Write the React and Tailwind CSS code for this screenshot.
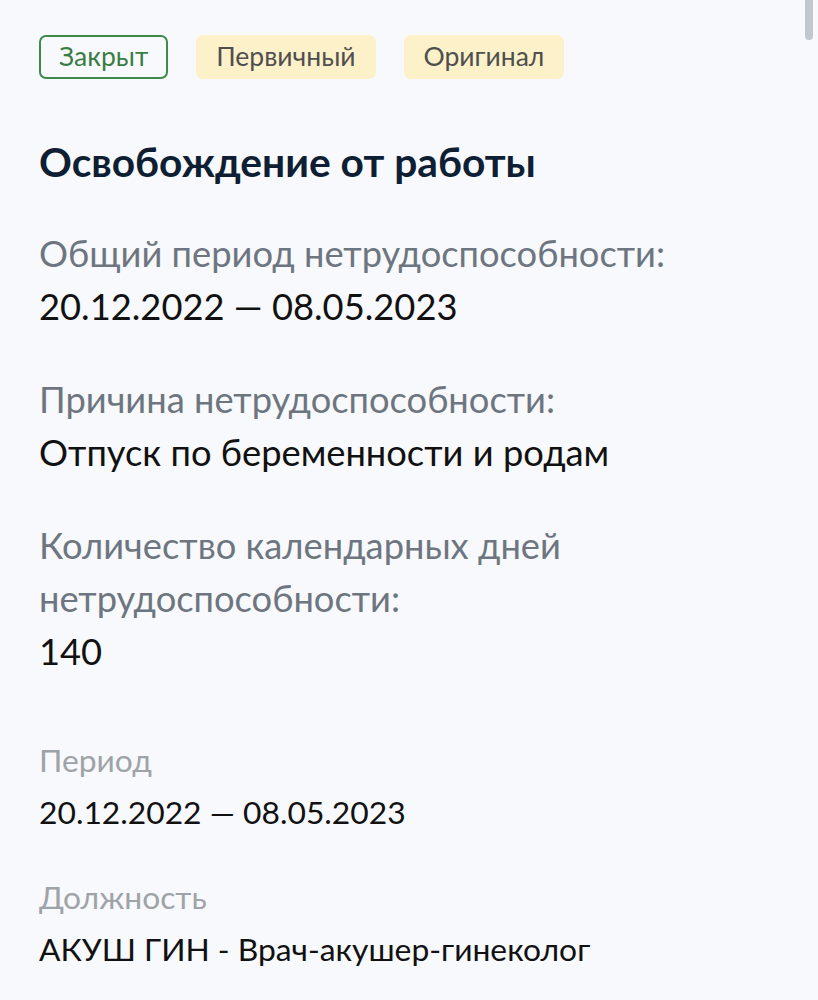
function Badge({ children, variant }) {
  if (variant === 'closed') {
    return (
      <span className="inline-flex items-center h-[44px] px-[18px] rounded-[7px] border-2 border-[#3f8a4b] text-[#3a7d44] text-[26.5px]">
        {children}
      </span>
    );
  }
  return (
    <span className="inline-flex items-center h-[44px] px-[20px] rounded-[7px] bg-[#fdf1c9] text-[#4f4f4f] text-[26.5px]">
      {children}
    </span>
  );
}

function Field({ label, value }) {
  return (
    <div className="text-[36.3px] leading-[53px]">
      <div className="text-[#6d7680]">{label}</div>
      <div className="text-[#111]">{value}</div>
    </div>
  );
}

function SmallField({ label, value }) {
  return (
    <div className="text-[31.8px]">
      <div className="text-[#9ea3a8] leading-[40px]">{label}</div>
      <div className="text-[#111] leading-[40px] mt-[12px]">{value}</div>
    </div>
  );
}

export default function App() {
  return (
    <div className="min-h-screen bg-[#f8f9fc] font-['Lato','Noto_Sans',sans-serif] relative overflow-hidden">
      <div className="absolute right-[5px] top-0 w-[8px] h-[40px] rounded-b bg-[#c3c8cf]" />
      <div className="px-[39px] pt-[35px]">
        <div className="flex gap-[28px]">
          <Badge variant="closed">Закрыт</Badge>
          <Badge>Первичный</Badge>
          <Badge>Оригинал</Badge>
        </div>

        <h1 className="mt-[58px] text-[40.7px] font-bold text-[#0e1e33] leading-[50px]">
          Освобождение от работы
        </h1>

        <div className="mt-[40px] flex flex-col gap-[40px]">
          <Field label="Общий период нетрудоспособности:" value="20.12.2022 — 08.05.2023" />
          <Field label="Причина нетрудоспособности:" value="Отпуск по беременности и родам" />
          <Field
            label={<>Количество календарных дней<br />нетрудоспособности:</>}
            value="140"
          />
        </div>

        <div className="mt-[62px] flex flex-col gap-[45px]">
          <SmallField label="Период" value="20.12.2022 — 08.05.2023" />
          <SmallField label="Должность" value="АКУШ ГИН - Врач-акушер-гинеколог" />
        </div>
      </div>
    </div>
  );
}
